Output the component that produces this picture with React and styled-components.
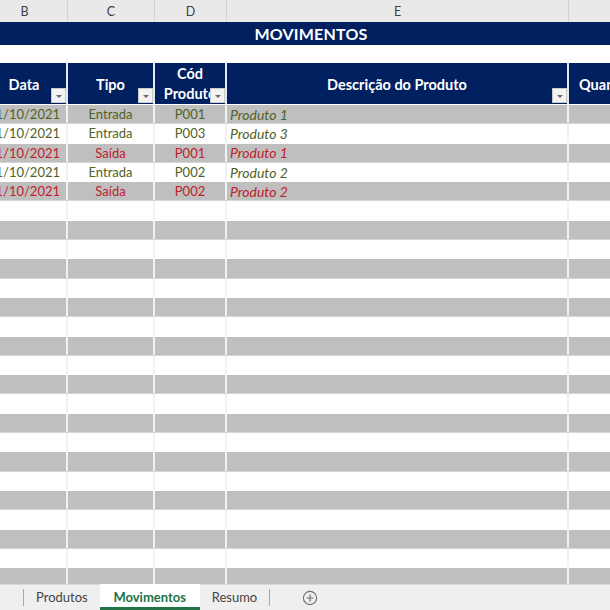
import React from 'react';
import styled, { createGlobalStyle } from 'styled-components';

const COLS = '86px 87px 72px 342px 120px';
const NAVY = '#002060';

const movimentos = [
    { data: '01/10/2021', tipo: 'Entrada', cod: 'P001', produto: 'Produto 1' },
    { data: '01/10/2021', tipo: 'Entrada', cod: 'P003', produto: 'Produto 3' },
    { data: '01/10/2021', tipo: 'Saída', cod: 'P001', produto: 'Produto 1' },
    { data: '01/10/2021', tipo: 'Entrada', cod: 'P002', produto: 'Produto 2' },
    { data: '01/10/2021', tipo: 'Saída', cod: 'P002', produto: 'Produto 2' },
];

const TOTAL_ROWS = 26;

const GlobalStyle = createGlobalStyle`
    html, body {
        margin: 0;
        padding: 0;
        background: #fff;
        overflow: hidden;
    }
    * {
        box-sizing: border-box;
    }
`;

const App = () => {
    const rows = [];
    for (let i = 0; i < TOTAL_ROWS; i++) {
        rows.push(movimentos[i] || null);
    }

    return (
        <Page>
            <GlobalStyle />
            <SheetArea>
                <Sheet>
                    <ColumnHeads>
                        <ColumnLetter>B</ColumnLetter>
                        <ColumnLetter>C</ColumnLetter>
                        <ColumnLetter>D</ColumnLetter>
                        <ColumnLetter>E</ColumnLetter>
                        <ColumnLetter>F</ColumnLetter>
                    </ColumnHeads>
                    <TitleBar>MOVIMENTOS</TitleBar>
                    <BlankRow />
                    <HeaderRow>
                        <HeaderCell>
                            <HeaderText>Data</HeaderText>
                            <FilterButton />
                        </HeaderCell>
                        <HeaderCell>
                            <HeaderText>Tipo</HeaderText>
                            <FilterButton />
                        </HeaderCell>
                        <HeaderCell>
                            <HeaderText $wrap>Cód<br />Produto</HeaderText>
                            <FilterButton />
                        </HeaderCell>
                        <HeaderCell>
                            <HeaderText>Descrição do Produto</HeaderText>
                            <FilterButton />
                        </HeaderCell>
                        <HeaderCell $last>
                            <HeaderText $left>Quantidade</HeaderText>
                        </HeaderCell>
                    </HeaderRow>
                    {rows.map((row, i) => {
                        const saida = row && row.tipo === 'Saída';
                        return (
                            <DataRow key={i} $shaded={i % 2 === 0} $red={saida}>
                                <Cell $center>{row ? row.data : ''}</Cell>
                                <Cell $center>{row ? row.tipo : ''}</Cell>
                                <Cell $center>{row ? row.cod : ''}</Cell>
                                <Cell $italic>{row ? row.produto : ''}</Cell>
                                <Cell />
                            </DataRow>
                        );
                    })}
                </Sheet>
            </SheetArea>
            <TabBar>
                <TabDivider />
                <Tab>Produtos</Tab>
                <Tab $active>Movimentos</Tab>
                <Tab>Resumo</Tab>
                <TabDivider />
                <AddSheet>
                    <svg width="16" height="16" viewBox="0 0 16 16">
                        <circle cx="8" cy="8" r="6.6" fill="none" stroke="#6f6f6f" strokeWidth="1.1" />
                        <path d="M8 4.6v6.8M4.6 8h6.8" stroke="#6f6f6f" strokeWidth="1.2" />
                    </svg>
                </AddSheet>
            </TabBar>
        </Page>
    );
};

const Page = styled.div`
    width: 610px;
    height: 610px;
    display: flex;
    flex-direction: column;
    overflow: hidden;
    font-family: Lato, "Open Sans", sans-serif;
`;

const SheetArea = styled.div`
    flex: 1;
    overflow: hidden;
`;

const Sheet = styled.div`
    width: 707px;
    margin-left: -18px;
    display: flex;
    flex-direction: column;
`;

const ColumnHeads = styled.div`
    display: grid;
    grid-template-columns: ${COLS};
    height: 22px;
    background: #e9e9e9;
`;

const ColumnLetter = styled.div`
    display: flex;
    align-items: center;
    justify-content: center;
    font-size: 12.5px;
    color: #3f3f3f;
    border-right: 1px solid #d2d2d2;
`;

const TitleBar = styled.div`
    height: 23px;
    background: ${NAVY};
    color: #fff;
    font-weight: 700;
    font-size: 16px;
    display: flex;
    align-items: center;
    justify-content: center;
    padding-right: 49px;
    letter-spacing: 0.2px;
`;

const BlankRow = styled.div`
    height: 18px;
    background: #fff;
`;

const HeaderRow = styled.div`
    display: grid;
    grid-template-columns: ${COLS};
    height: 42px;
    border-bottom: 1px solid #fff;
`;

const HeaderCell = styled.div`
    display: grid;
    background: ${NAVY};
    border-right: ${props => props.$last ? 'none' : '2px solid #e4e8ef'};
    overflow: hidden;
`;

const HeaderText = styled.div`
    grid-area: 1 / 1;
    align-self: center;
    justify-self: ${props => props.$left ? 'start' : 'center'};
    padding-left: ${props => props.$left ? '10px' : '0'};
    color: #fff;
    font-weight: 700;
    font-size: 14.5px;
    line-height: ${props => props.$wrap ? '20px' : '16px'};
    text-align: center;
    white-space: nowrap;
    margin-top: ${props => props.$wrap ? '0' : '2px'};
`;

const FilterButton = styled.div`
    grid-area: 1 / 1;
    align-self: end;
    justify-self: end;
    width: 15px;
    height: 15px;
    margin: 0 0 1px 0;
    background: #f3f3f3;
    border: 1px solid #c9c9c9;
    display: flex;
    align-items: center;
    justify-content: center;

    &::after {
        content: '';
        width: 0;
        height: 0;
        margin-top: 2px;
        border-left: 3px solid transparent;
        border-right: 3px solid transparent;
        border-top: 3px solid #6a6a6a;
    }
`;

const DataRow = styled.div`
    display: grid;
    grid-template-columns: ${COLS};
    height: 19.3px;
    flex-shrink: 0;
    background: ${props => props.$shaded ? '#bfbfbf' : '#fff'};
    border-bottom: 1px solid ${props => props.$shaded ? '#d6d6d6' : '#fff'};
    color: ${props => props.$red ? '#c0202a' : '#4f6228'};
`;

const Cell = styled.div`
    display: flex;
    align-items: center;
    justify-content: ${props => props.$center ? 'center' : 'flex-start'};
    padding-left: ${props => props.$center ? '0' : '3px'};
    font-size: ${props => props.$italic ? '14px' : '13px'};
    font-style: ${props => props.$italic ? 'italic' : 'normal'};
    white-space: nowrap;
    overflow: hidden;
    border-right: 2px solid #f1f1f1;
`;

const TabBar = styled.div`
    height: 26px;
    flex-shrink: 0;
    display: flex;
    align-items: stretch;
    background: #efefef;
    border-top: 1px solid #d8d8d8;
    padding-left: 23px;
`;

const TabDivider = styled.div`
    width: 1px;
    margin: 4px 0 4px;
    background: #a8a8a8;
`;

const Tab = styled.div`
    display: flex;
    align-items: center;
    justify-content: center;
    padding: 0 12px;
    min-width: ${props => props.$active ? '100px' : '0'};
    font-size: 13px;
    margin-top: -1px;
    font-weight: ${props => props.$active ? 700 : 400};
    color: ${props => props.$active ? '#217346' : '#444'};
    background: ${props => props.$active ? '#fff' : 'transparent'};
    border-bottom: 3px solid ${props => props.$active ? '#217346' : 'transparent'};
    padding-top: 2px;
`;

const AddSheet = styled.div`
    display: flex;
    align-items: center;
    margin-left: 32px;
`;

export default App;
